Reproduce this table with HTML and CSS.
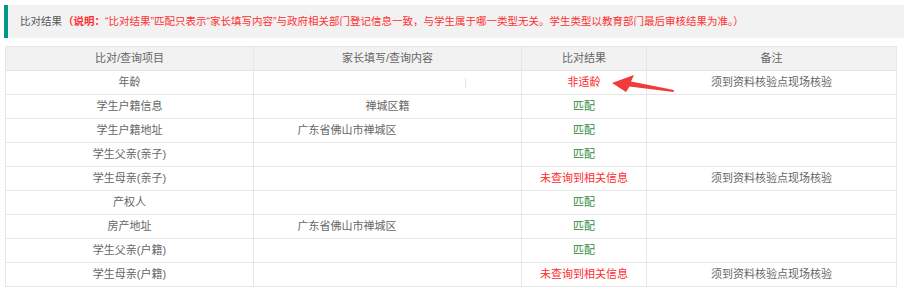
FILE: index.html
```html
<!DOCTYPE html>
<html lang="zh-CN">
<head>
<meta charset="utf-8">
<title>比对结果</title>
<link rel="stylesheet" href="styles.css">
</head>
<body>
<div class="page">
  <div class="bar">
    <span class="bar-title">比对结果</span><span class="note"><b>（说明：</b>“比对结果”匹配只表示“家长填写内容”与政府相关部门登记信息一致，与学生属于哪一类型无关。学生类型以教育部门最后审核结果为准。）</span>
  </div>
  <div class="table-wrap">
    <table class="result">
      <colgroup>
        <col class="c1"><col class="c2"><col class="c3"><col class="c4">
      </colgroup>
      <thead>
        <tr><th>比对/查询项目</th><th>家长填写/查询内容</th><th>比对结果</th><th>备注</th></tr>
      </thead>
      <tbody>
        <tr><td>年龄</td><td><span class="redact-tick"></span></td><td class="bad">非适龄</td><td>须到资料核验点现场核验</td></tr>
        <tr><td>学生户籍信息</td><td>禅城区籍</td><td class="ok">匹配</td><td></td></tr>
        <tr><td>学生户籍地址</td><td><span class="addr">广东省佛山市禅城区</span></td><td class="ok">匹配</td><td></td></tr>
        <tr><td>学生父亲(亲子)</td><td></td><td class="ok">匹配</td><td></td></tr>
        <tr><td>学生母亲(亲子)</td><td></td><td class="bad">未查询到相关信息</td><td>须到资料核验点现场核验</td></tr>
        <tr><td>产权人</td><td></td><td class="ok">匹配</td><td></td></tr>
        <tr><td>房产地址</td><td><span class="addr">广东省佛山市禅城区</span></td><td class="ok">匹配</td><td></td></tr>
        <tr><td>学生父亲(户籍)</td><td></td><td class="ok">匹配</td><td></td></tr>
        <tr><td>学生母亲(户籍)</td><td></td><td class="bad">未查询到相关信息</td><td>须到资料核验点现场核验</td></tr>
      </tbody>
    </table>
    <svg class="arrow" width="70" height="24" viewBox="0 0 70 24" aria-hidden="true">
      <path d="M2 9 L24 1 L21 7.5 L64 16 L63.5 18 L19.5 12.5 L16 18 Z" fill="#f23a3a"/>
    </svg>
  </div>
</div>
</body>
</html>
```
FILE: styles.css
```css
html, body {
  margin: 0;
  padding: 0;
  background: #ffffff;
}
body {
  font-family: "Liberation Sans", "Noto Sans CJK SC", sans-serif;
  font-size: 11px;
  color: #666666;
}
.page {
  padding: 5px 0 0 4px;
}
.bar {
  height: 33px;
  line-height: 33px;
  background: #f2f2f2;
  border-left: 4px solid #009688;
  padding-left: 12px;
  white-space: nowrap;
  overflow: hidden;
  font-size: 10.5px;
}
.bar-title {
  color: #555555;
  margin-right: 1px;
}
.note {
  color: #ff3030;
}
.note b {
  font-weight: bold;
}
.table-wrap {
  position: relative;
  margin: 8px 0 0 1px;
  width: 891px;
}
.result {
  border-collapse: collapse;
  table-layout: fixed;
  width: 891px;
}
.c1 { width: 248px; }
.c2 { width: 268px; }
.c3 { width: 125px; }
.c4 { width: 250px; }
.result th,
.result td {
  height: 23px;
  padding: 0;
  border: 1px solid #e6e6e6;
  text-align: center;
  font-weight: normal;
  line-height: 23px;
  color: #666666;
  white-space: nowrap;
}
.result th {
  background: #f2f2f2;
}
.result td.ok {
  color: #2f8a3c;
}
.result td.bad {
  color: #ff2a2a;
}
.addr {
  display: inline-block;
  padding-right: 81px;
}
.redact-tick {
  display: inline-block;
  width: 1px;
  height: 10px;
  background: #e4e4e4;
  vertical-align: middle;
  margin-left: 156px;
}
.arrow {
  position: absolute;
  left: 605px;
  top: 28px;
}
```
